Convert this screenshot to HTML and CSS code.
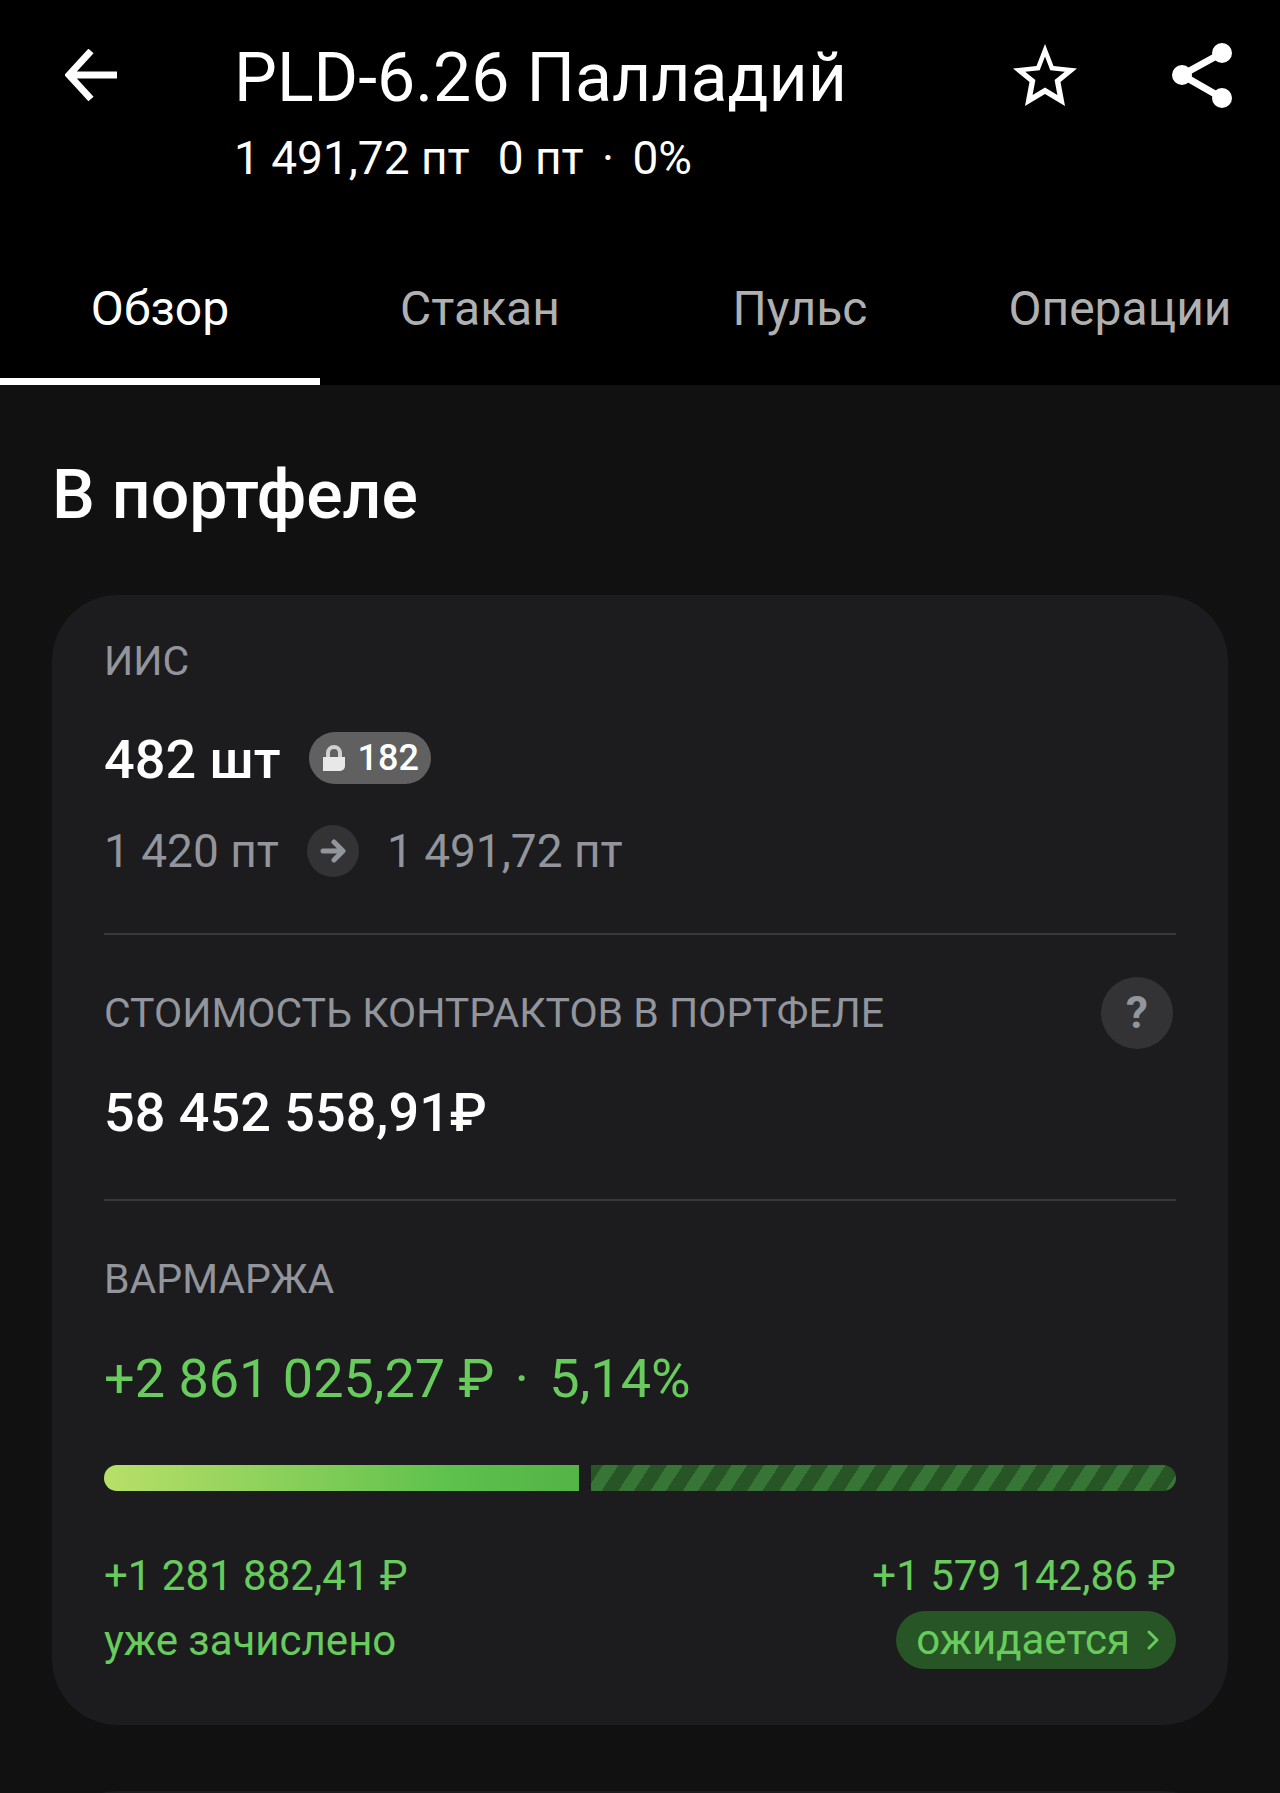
FILE: index.html
```html
<!DOCTYPE html>
<html lang="ru">
<head>
  <meta charset="UTF-8" />
  <meta name="viewport" content="width=device-width, initial-scale=1.0" />
  <title>PLD-6.26 Палладий</title>
  <link rel="stylesheet" href="styles.css">
</head>
<body>
  <div class="screen">
    <header class="header">
      <div class="topbar">
        <button class="icon-btn back" type="button" aria-label="Назад">
          <svg width="54" height="54" viewBox="0 0 54 54" fill="none" stroke="#fff" stroke-width="7">
            <path d="M52 26H6M26 2L4 26l22 24" />
          </svg>
        </button>
        <div class="heading">
          <h1>PLD-6.26 Палладий</h1>
          <p class="quote"><span>1 491,72 пт</span><span>0 пт <span class="dot">·</span> 0%</span></p>
        </div>
        <div class="actions">
          <button class="icon-btn" type="button" aria-label="В избранное">
            <svg width="64" height="64" viewBox="0 0 64 64" fill="#fff" fill-rule="evenodd">
              <path d="M32 0L40.500 22 64 24.500 47.500 38 52 62 32 50 12 62 16.500 38 0 24.500 23.500 22zM32 12.500L26.700 26.200 12.200 27.700 22.400 36.100 19.600 51 32 43.500 44.400 51 41.600 36.100 51.800 27.700 37.300 26.200z" />
            </svg>
          </button>
          <button class="icon-btn" type="button" aria-label="Поделиться">
            <svg width="60" height="66" viewBox="0 0 60 66" fill="#fff">
              <path d="M50 10L10 32l40 23" fill="none" stroke="#fff" stroke-width="7" />
              <circle cx="10" cy="32" r="10" />
              <circle cx="50" cy="10" r="10" />
              <circle cx="50" cy="55" r="10" />
            </svg>
          </button>
        </div>
      </div>
      <nav class="tabs">
        <a class="tab active" href="#overview">Обзор</a>
        <a class="tab" href="#book">Стакан</a>
        <a class="tab" href="#pulse">Пульс</a>
        <a class="tab" href="#operations">Операции</a>
      </nav>
    </header>

    <main class="content" id="overview">
      <h2>В портфеле</h2>

      <div class="card">
        <section class="block account">
          <h3 class="label">ИИС</h3>
          <div class="row amount">
            <span class="value bold">482 шт</span>
            <span class="locked">
              <svg width="22" height="26" viewBox="0 0 22 26">
                <path d="M5 13V8a6 6 0 0 1 12 0v5" fill="none" stroke="#d0d0d0" stroke-width="4" />
                <path d="M0 12h22v9a5 5 0 0 1-5 5H0z" fill="#e8e8e8" />
              </svg>
              182
            </span>
          </div>
          <div class="row prices">
            <span>1 420 пт</span>
            <span class="arrow">
              <svg width="26" height="24" viewBox="0 0 26 24" fill="none" stroke="#92959c" stroke-width="5" stroke-linecap="round" stroke-linejoin="round">
                <path d="M3 12h19M14 3l9 9-9 9" />
              </svg>
            </span>
            <span>1 491,72 пт</span>
          </div>
        </section>

        <section class="block">
          <div class="label-row">
            <h3 class="label">СТОИМОСТЬ КОНТРАКТОВ В ПОРТФЕЛЕ</h3>
            <button class="help" type="button">?</button>
          </div>
          <p class="value bold">58 452 558,91₽</p>
        </section>

        <section class="block">
          <div class="label-row">
            <h3 class="label">ВАРМАРЖА</h3>
          </div>
          <p class="value green">+2 861 025,27 ₽ <span class="dot">·</span> 5,14%</p>
          <div class="bar">
            <div class="bar-done" style="flex-grow: 1281882"></div>
            <div class="bar-wait" style="flex-grow: 1579142"></div>
          </div>
          <div class="parts">
            <div class="part">
              <span>+1 281 882,41 ₽</span>
              <span class="state">уже зачислено</span>
            </div>
            <div class="part right">
              <span>+1 579 142,86 ₽</span>
              <button class="state pill" type="button">
                ожидается
                <svg width="14" height="22" viewBox="0 0 14 22" fill="none" stroke="#67cc5c" stroke-width="3" stroke-linecap="round" stroke-linejoin="round">
                  <path d="M3 3l8 8-8 8" />
                </svg>
              </button>
            </div>
          </div>
        </section>
      </div>

      <div class="card next"></div>
    </main>
  </div>
</body>
</html>
```
FILE: styles.css
```css
* {
  box-sizing: border-box;
}
body {
  margin: 0;
  font-family: Roboto, sans-serif;
  background: #111;
  color: #fff;
}
h1, h2, h3, p {
  margin: 0;
  font-weight: 400;
}
button {
  font: inherit;
  color: inherit;
  border: none;
  padding: 0;
  cursor: pointer;
}
svg {
  display: block;
  flex-shrink: 0;
}
.screen {
  height: 100vh;
  overflow: hidden;
}
.header {
  background: #000;
}
.topbar {
  display: flex;
  align-items: flex-start;
  padding: 36px 48px 45px 65px;
}
.icon-btn {
  display: flex;
  align-items: center;
  height: 80px;
  background: none;
}
.back {
  margin-right: 115px;
}
.heading {
  flex: 1;
  padding-top: 2px;
}
h1 {
  font-size: 68px;
  line-height: 80px;
}
.quote {
  display: flex;
  gap: 28px;
  margin-top: 12px;
  font-size: 46px;
  line-height: 56px;
}
.dot {
  margin: 0 7px;
}
.actions {
  display: flex;
  gap: 95px;
}
.tabs {
  display: grid;
  grid-template-columns: repeat(4, 1fr);
}
.tab {
  height: 154px;
  font-size: 48px;
  line-height: 156px;
  text-align: center;
  color: #b0b0b0;
  text-decoration: none;
}
.tab.active {
  color: #fff;
  box-shadow: inset 0 -7px #fff;
}
.content {
  padding: 70px 52px 0;
}
h2 {
  margin-bottom: 60px;
  font-size: 68px;
  line-height: 80px;
  font-weight: 500;
}
.card {
  padding: 0 52px 54px;
  border-radius: 66px;
  background: #1c1c1e;
}
.card.next {
  height: 400px;
  margin-top: 66px;
}
.block {
  padding: 42px 0 54px;
  border-bottom: 2px solid #38383a;
}
.block.account {
  padding-top: 38px;
}
.block:last-child {
  padding-bottom: 0;
  border-bottom: none;
}
.label {
  font-size: 41px;
  line-height: 56px;
  color: #92959c;
}
.label-row {
  display: flex;
  align-items: center;
  justify-content: space-between;
  height: 72px;
  margin-bottom: 32px;
  padding-right: 3px;
}
.help {
  width: 72px;
  height: 72px;
  border-radius: 50%;
  background: #333335;
  color: #92959c;
  font-size: 44px;
  font-weight: 700;
}
.row {
  display: flex;
  align-items: center;
}
.amount {
  gap: 28px;
  margin: 39px 0 31px;
}
.value {
  font-size: 54px;
  line-height: 64px;
}
.bold {
  font-weight: 500;
}
.green {
  color: #67cc5c;
}
.locked {
  display: flex;
  align-items: center;
  gap: 13px;
  height: 52px;
  margin-bottom: 4px;
  padding: 0 12px 0 14px;
  border-radius: 26px;
  background: #606060;
  font-size: 36px;
  font-weight: 500;
}
.prices {
  font-size: 46px;
  line-height: 56px;
  color: #92959c;
}
.arrow {
  display: flex;
  align-items: center;
  justify-content: center;
  width: 52px;
  height: 52px;
  margin: 0 28px;
  border-radius: 50%;
  background: #333335;
}
.bar {
  display: flex;
  gap: 12px;
  height: 26px;
  margin: 54px 0 57px;
}
.bar-done {
  border-radius: 13px 0 0 13px;
  background: linear-gradient(90deg, #b8e068, #5cc04c 75%, #54b446);
}
.bar-wait {
  border-radius: 0 13px 13px 0;
  background: repeating-linear-gradient(123deg, #285526 0 10px, #377537 10px 23px, #285526 23px 27px);
}
.parts {
  display: flex;
  justify-content: space-between;
  font-size: 42px;
  line-height: 56px;
  color: #67cc5c;
}
.part {
  display: flex;
  flex-direction: column;
  gap: 7px;
}
.right {
  align-items: flex-end;
}
.state {
  line-height: 60px;
}
.pill {
  display: flex;
  align-items: center;
  gap: 16px;
  height: 58px;
  padding: 0 16px 0 20px;
  border-radius: 29px;
  background: #285526;
}
```
